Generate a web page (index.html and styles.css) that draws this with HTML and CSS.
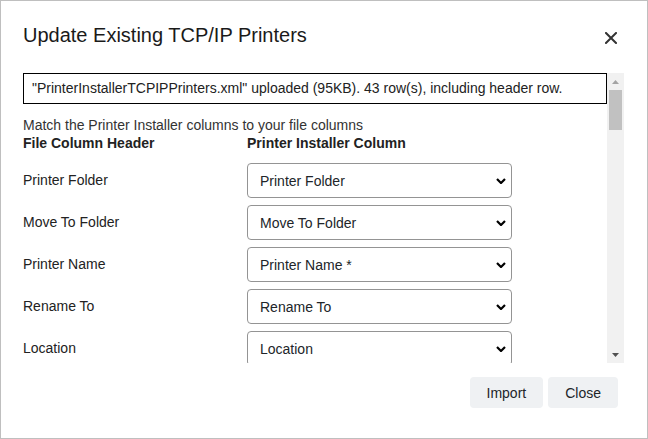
FILE: index.html
```html
<!DOCTYPE html>
<html lang="en">
<head>
<meta charset="utf-8">
<title>Update Existing TCP/IP Printers</title>
<link rel="stylesheet" href="styles.css">
</head>
<body>
<div class="dialog">
  <div class="dialog-header">
    <h1 class="dialog-title">Update Existing TCP/IP Printers</h1>
    <button class="close-btn" aria-label="Close">
      <svg width="12" height="12" viewBox="0 0 12 12"><path d="M1 1 L11 11 M11 1 L1 11" stroke="#333" stroke-width="2" stroke-linecap="square" fill="none"/></svg>
    </button>
  </div>
  <div class="scroller">
    <div class="scroll-content">
      <div class="info-box">"PrinterInstallerTCPIPPrinters.xml" uploaded (95KB). 43 row(s), including header row.</div>
      <p class="intro">Match the Printer Installer columns to your file columns</p>
      <div class="map-grid">
        <div class="col-head">File Column Header</div>
        <div class="col-head">Printer Installer Column</div>

        <div class="label">Printer Folder</div>
        <div class="select-wrap">
          <select class="select"><option>Printer Folder</option></select>
          <svg class="chev" width="10" height="6" viewBox="0 0 10 6"><polyline points="1,1 5,5 9,1" fill="none" stroke="#000" stroke-width="2.2"/></svg>
        </div>

        <div class="label">Move To Folder</div>
        <div class="select-wrap">
          <select class="select"><option>Move To Folder</option></select>
          <svg class="chev" width="10" height="6" viewBox="0 0 10 6"><polyline points="1,1 5,5 9,1" fill="none" stroke="#000" stroke-width="2.2"/></svg>
        </div>

        <div class="label">Printer Name</div>
        <div class="select-wrap">
          <select class="select"><option>Printer Name *</option></select>
          <svg class="chev" width="10" height="6" viewBox="0 0 10 6"><polyline points="1,1 5,5 9,1" fill="none" stroke="#000" stroke-width="2.2"/></svg>
        </div>

        <div class="label">Rename To</div>
        <div class="select-wrap">
          <select class="select"><option>Rename To</option></select>
          <svg class="chev" width="10" height="6" viewBox="0 0 10 6"><polyline points="1,1 5,5 9,1" fill="none" stroke="#000" stroke-width="2.2"/></svg>
        </div>

        <div class="label">Location</div>
        <div class="select-wrap">
          <select class="select"><option>Location</option></select>
          <svg class="chev" width="10" height="6" viewBox="0 0 10 6"><polyline points="1,1 5,5 9,1" fill="none" stroke="#000" stroke-width="2.2"/></svg>
        </div>
      </div>
    </div>
    <div class="scrollbar">
      <div class="sb-btn"><svg width="7" height="4" viewBox="0 0 7 4"><polygon points="0,4 3.5,0 7,4" fill="#a3a3a3"/></svg></div>
      <div class="sb-thumb"></div>
      <div class="sb-track"></div>
      <div class="sb-btn"><svg width="7" height="4" viewBox="0 0 7 4"><polygon points="0,0 7,0 3.5,4" fill="#505050"/></svg></div>
    </div>
  </div>
  <div class="dialog-footer">
    <button class="btn">Import</button>
    <button class="btn">Close</button>
  </div>
</div>
</body>
</html>
```
FILE: styles.css
```css
* { box-sizing: border-box; }
html, body { margin: 0; padding: 0; background: #fff; }
body {
  font-family: "Liberation Sans", Arial, sans-serif;
  font-size: 14px;
  color: #212529;
}
.dialog {
  width: 648px;
  height: 439px;
  border: 1px solid #bfbfbf;
  display: flex;
  flex-direction: column;
  overflow: hidden;
  background: #fff;
}
.dialog-header {
  display: flex;
  justify-content: space-between;
  align-items: flex-start;
  padding: 22px 22px 0 22px;
}
.dialog-title {
  margin: 0;
  font-size: 20px;
  line-height: 24px;
  font-weight: normal;
  color: #1a1a1a;
}
.close-btn {
  border: 0;
  background: none;
  padding: 0;
  margin: 9px 8px 0 0;
  width: 12px;
  height: 12px;
  display: flex;
  cursor: pointer;
}
.scroller {
  display: flex;
  height: 290px;
  margin: 26px 23px 0 22px;
}
.scroll-content {
  flex: 1;
  overflow: hidden;
}
.info-box {
  border: 1px solid #000;
  padding: 6px 8px 7px 8px;
  line-height: 16px;
  color: #222;
  white-space: nowrap;
}
.intro {
  margin: 12px 0 0 0;
  line-height: 18px;
  color: #333;
}
.map-grid {
  display: grid;
  grid-template-columns: 224px 265px;
  row-gap: 7px;
  align-items: center;
}
.col-head {
  font-weight: bold;
  line-height: 18px;
  color: #222;
  margin-bottom: 4px;
}
.label {
  line-height: 18px;
  padding-bottom: 2px;
  color: #222;
}
.select-wrap {
  position: relative;
  height: 35px;
}
.select {
  appearance: none;
  -webkit-appearance: none;
  width: 100%;
  height: 35px;
  border: 1px solid #949494;
  border-radius: 4px;
  background: #fff;
  padding: 0 24px 0 12px;
  font-family: inherit;
  font-size: 14px;
  color: #212529;
  margin: 0;
}
.chev {
  position: absolute;
  right: 6px;
  top: 15px;
  pointer-events: none;
}
.scrollbar {
  width: 17px;
  background: #f1f1f1;
  display: flex;
  flex-direction: column;
}
.sb-btn {
  height: 17px;
  display: flex;
  align-items: center;
  justify-content: center;
}
.sb-thumb {
  height: 40px;
  margin: 0 2px;
  background: #c1c1c1;
}
.sb-track { flex: 1; }
.dialog-footer {
  display: flex;
  justify-content: flex-end;
  gap: 5px;
  padding: 14px 29px 0 0;
}
.btn {
  height: 31px;
  padding: 0 17px;
  border: 0;
  border-radius: 4px;
  background: #eff1f3;
  font-family: inherit;
  font-size: 14px;
  color: #212529;
  cursor: pointer;
}
```
